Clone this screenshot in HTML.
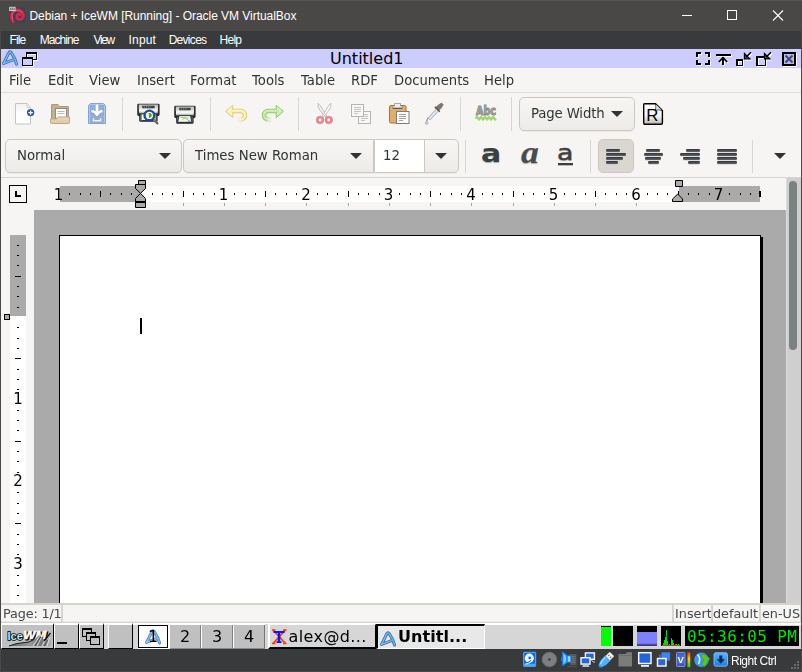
<!DOCTYPE html>
<html><head><meta charset="utf-8"><title>Debian + IceWM [Running] - Oracle VM VirtualBox</title>
<style>
html,body{margin:0;padding:0;}
body{width:802px;height:672px;position:relative;overflow:hidden;background:#4a4846;font-family:"DejaVu Sans","Liberation Sans",sans-serif;}
.a{position:absolute;}
.t{position:absolute;white-space:nowrap;line-height:1;}
.m,.st,.ct{will-change:transform;}
svg{position:absolute;overflow:visible;}
#vbt{left:0;top:0;width:802px;height:31px;background:#4a4846;}
#vbm{left:1px;top:31px;width:800px;height:18px;background:#393a3b;}
.vb{font-family:"Liberation Sans",sans-serif;color:#fff;font-size:12px;}
#ice{left:1px;top:49px;width:800px;height:19px;background:#ccccff;}
#abi{left:1px;top:68px;width:800px;height:555px;background:#f6f5f4;}
#doc{left:34px;top:210px;width:752px;height:393px;background:#aaaaaa;}
#page{left:59px;top:235px;width:701px;height:368px;background:#fff;border-left:1px solid #000;border-top:1px solid #000;box-sizing:border-box;}
#task{left:1px;top:623px;width:800px;height:26px;background:#d6d6d6;}
#vbs{left:1px;top:649px;width:800px;height:22px;background:#393a3b;}
.m{font-size:13.2px;color:#2e3436;top:73.5px;}
.sep{position:absolute;width:1px;background:#d9d5d1;}
.combo{position:absolute;box-sizing:border-box;border:1px solid #cdc7c2;border-radius:5px;background:linear-gradient(#f7f6f5,#edebe9);box-shadow:0 1px 0 rgba(0,0,0,0.04);}
.ct{font-size:13.3px;color:#2e3436;}
.arr{position:absolute;width:0;height:0;border-left:6px solid transparent;border-right:6px solid transparent;border-top:6px solid #2e3436;}
.tb{position:absolute;box-sizing:border-box;background:#c3c3c3;border-top:1px solid #fff;border-left:1px solid #fff;border-right:1px solid #5a5a5a;border-bottom:1px solid #5a5a5a;}
.st{font-size:12.8px;color:#41474a;top:608px;}
</style></head><body>
<div class="a" id="vbt"><div class="a" style="left:0;top:0;width:802px;height:1px;background:#585654"></div><div class="t vb" style="left:29.4px;top:10px;letter-spacing:-0.04px;">Debian + IceWM [Running] - Oracle VM VirtualBox</div><svg style="left:9px;top:6px" width="17" height="18" viewBox="9 6 17 18"><rect x="9.200" y="7.200" width="15.800" height="15.600" fill="#3a4356"/><path d="M13.300 21.800 C10.800 18.500 10.600 13.500 13.500 11.200 C17 8.600 22.400 10.200 23.300 14.200 C24 17.600 21.600 20 19 19.400 C16.600 18.800 16 16 17.400 14.600 C18.400 13.700 19.900 14 20.300 15" fill="none" stroke="#e4234b" stroke-width="2.600" stroke-linecap="round"/><path d="M12.600 19 C11.300 15.500 12.300 12.500 14.500 11.300 C17 10 20.500 10.600 22 12.800" fill="none" stroke="#f56a84" stroke-width="0.800" stroke-linecap="round"/><rect x="9.200" y="6.800" width="6.400" height="4.200" fill="#d4d4d4"/><rect x="10.200" y="7.800" width="4.400" height="2" fill="#5a5a5a"/><rect x="11.200" y="8.200" width="1" height="1" fill="#ddd"/><rect x="12.800" y="8.200" width="1" height="1" fill="#ddd"/></svg><svg style="left:640px;top:0" width="162" height="31" viewBox="0 0 162 31"><g stroke="#fff" stroke-width="1" fill="none" shape-rendering="crispEdges"><line x1="42" y1="15.5" x2="52" y2="15.5"/><rect x="87.5" y="10.5" width="9" height="9"/></g><g stroke="#fff" stroke-width="1.1" fill="none"><line x1="133" y1="10.5" x2="143" y2="20.5"/><line x1="143" y1="10.5" x2="133" y2="20.5"/></g></svg></div>
<div class="a" id="vbm"><div class="t vb" style="left:8.54px;top:3px;letter-spacing:-0.893px;">File</div><div class="t vb" style="left:38.64px;top:3px;letter-spacing:-0.92px;">Machine</div><div class="t vb" style="left:92.5px;top:3px;letter-spacing:-1.367px;">View</div><div class="t vb" style="left:127.62px;top:3px;letter-spacing:0.16px;">Input</div><div class="t vb" style="left:167.64px;top:3px;letter-spacing:-0.697px;">Devices</div><div class="t vb" style="left:218.54px;top:3px;letter-spacing:-0.74px;">Help</div></div>
<div class="a" id="ice"><div class="t" style="left:329px;top:2px;font-size:16px;color:#000;">Untitled1</div></div>
<svg style="left:1px;top:48.7px;opacity:1" width="18" height="17" viewBox="1 49.500 18 17"><path d="M3.600 63.900 L8.700 53.600 Q9.900 51.200 11.400 53.400 C13.600 56.600 15.400 60.400 16.600 64.600 M3.600 63.900 L13.700 60.100" fill="none" stroke="#3772b8" stroke-width="3.100" stroke-linecap="round" stroke-linejoin="round"/><path d="M3.600 63.900 L8.700 53.600 Q9.900 51.200 11.400 53.400 C13.600 56.600 15.400 60.400 16.600 64.600 M3.600 63.900 L13.700 60.100" fill="none" stroke="#4f8fd0" stroke-width="1.900" stroke-linecap="round" stroke-linejoin="round"/><path d="M3.600 63.900 L8.700 53.600 Q9.900 51.200 11.400 53.400 C13.600 56.600 15.400 60.400 16.600 64.600 M3.600 63.900 L13.700 60.100" fill="none" stroke="#9ccaee" stroke-width="0.900" stroke-linecap="round" stroke-linejoin="round" stroke-dasharray="1.200 1"/></svg><svg style="left:20px;top:50px" width="20" height="18" viewBox="20 50 20 18" shape-rendering="crispEdges"><g fill="#fff"><path d="M27 53 H38 V61 H27 Z M28 55 V60 H37 V55 Z" fill-rule="evenodd"/><path d="M23 58 H34 V67 H23 Z M24 60 V66 H33 V60 Z" fill-rule="evenodd"/></g><g fill="#000"><path d="M26 52 H37 V60 H26 Z M27 54 V59 H36 V54 Z" fill-rule="evenodd"/></g><rect x="23" y="58" width="9" height="7" fill="#ccccff"/><g fill="#000"><path d="M22 57 H33 V66 H22 Z M23 59 V65 H32 V59 Z" fill-rule="evenodd"/></g></svg><svg style="left:690px;top:49px" width="112" height="19" viewBox="690 49 112 19" shape-rendering="crispEdges"><g transform="translate(1,1)" fill="#fff" stroke="none"><rect x="696" y="52" width="5" height="2"/><rect x="696" y="52" width="2" height="5"/><rect x="705" y="52" width="5" height="2"/><rect x="708" y="52" width="2" height="5"/><rect x="696" y="63" width="5" height="2"/><rect x="696" y="60" width="2" height="5"/><rect x="705" y="63" width="5" height="2"/><rect x="708" y="60" width="2" height="5"/><rect x="716" y="54" width="15" height="2"/><rect x="722" y="57" width="2" height="8"/><path d="M723 56.600 L727.800 61.400 L726.600 62.600 L723 59 L719.400 62.600 L718.200 61.400 Z" shape-rendering="auto"/><path d="M736 59 H743 V66 H736 Z M738 61 V64.800 H741.800 V61 Z" fill-rule="evenodd"/><path d="M756 56 H766 V66 H756 Z M758 58 V64.800 H764.800 V58 Z" fill-rule="evenodd"/></g><g transform="translate(1,1)" shape-rendering="auto"><path d="M744.5 53.500 V58.800 H749.8 Z" fill="#fff" stroke="#fff" stroke-width="1.300" stroke-linejoin="miter"/><path d="M746 57.300 L751 52.300" stroke="#fff" stroke-width="1.500" fill="none"/></g><g transform="translate(1,1)" shape-rendering="auto"><path d="M764.5 53.500 V58.800 H769.8 Z" fill="#fff" stroke="#fff" stroke-width="1.300" stroke-linejoin="miter"/><path d="M766 57.300 L771 52.300" stroke="#fff" stroke-width="1.500" fill="none"/></g><g transform="translate(0,0)" fill="#000" stroke="none"><rect x="696" y="52" width="5" height="2"/><rect x="696" y="52" width="2" height="5"/><rect x="705" y="52" width="5" height="2"/><rect x="708" y="52" width="2" height="5"/><rect x="696" y="63" width="5" height="2"/><rect x="696" y="60" width="2" height="5"/><rect x="705" y="63" width="5" height="2"/><rect x="708" y="60" width="2" height="5"/><rect x="716" y="54" width="15" height="2"/><rect x="722" y="57" width="2" height="8"/><path d="M723 56.600 L727.800 61.400 L726.600 62.600 L723 59 L719.400 62.600 L718.200 61.400 Z" shape-rendering="auto"/><path d="M736 59 H743 V66 H736 Z M738 61 V64.800 H741.800 V61 Z" fill-rule="evenodd"/><path d="M756 56 H766 V66 H756 Z M758 58 V64.800 H764.800 V58 Z" fill-rule="evenodd"/></g><g transform="translate(0,0)" shape-rendering="auto"><path d="M744.5 53.500 V58.800 H749.8 Z" fill="#50507c" stroke="#000" stroke-width="1.300" stroke-linejoin="miter"/><path d="M746 57.300 L751 52.300" stroke="#000" stroke-width="1.500" fill="none"/></g><g transform="translate(0,0)" shape-rendering="auto"><path d="M764.5 53.500 V58.800 H769.8 Z" fill="#50507c" stroke="#000" stroke-width="1.300" stroke-linejoin="miter"/><path d="M766 57.300 L771 52.300" stroke="#000" stroke-width="1.500" fill="none"/></g><rect x="783" y="53" width="14" height="14" fill="#fff"/><rect x="782" y="52" width="14" height="14" fill="#000"/><rect x="784" y="54" width="10" height="10" fill="#b9b9e8"/><g shape-rendering="auto" stroke="#46466e" stroke-width="2"><path d="M785.500 55.500 L792.500 62.500 M792.500 55.500 L785.500 62.500"/></g></svg>
<div class="a" id="abi"></div>
<div class="t m" style="left:9px;">File</div><div class="t m" style="left:48px;">Edit</div><div class="t m" style="left:89px;">View</div><div class="t m" style="left:137px;">Insert</div><div class="t m" style="left:190px;">Format</div><div class="t m" style="left:252px;">Tools</div><div class="t m" style="left:301px;">Table</div><div class="t m" style="left:351px;">RDF</div><div class="t m" style="left:394px;">Documents</div><div class="t m" style="left:484px;">Help</div><div class="a" style="left:1px;top:92px;width:800px;height:1px;background:#dedbd8"></div><div class="a" style="left:1px;top:177px;width:800px;height:1px;background:#d8d4d0"></div><div class="sep" style="left:122px;top:97px;height:34px"></div><div class="sep" style="left:210px;top:97px;height:34px"></div><div class="sep" style="left:298px;top:97px;height:34px"></div><div class="sep" style="left:460px;top:97px;height:34px"></div><div class="sep" style="left:511px;top:97px;height:34px"></div><div class="sep" style="left:465px;top:140px;height:33px"></div><div class="sep" style="left:590px;top:140px;height:33px"></div><div class="sep" style="left:752px;top:140px;height:33px"></div>
<svg style="left:0;top:92px" width="802" height="44" viewBox="0 92 802 44">
<defs>
<linearGradient id="gpaper" x1="0" y1="0" x2="0" y2="1"><stop offset="0" stop-color="#f1f1ef"/><stop offset="0.5" stop-color="#ffffff"/><stop offset="1" stop-color="#ffffff"/></linearGradient>
<linearGradient id="gprn" x1="0" y1="0" x2="0" y2="1"><stop offset="0" stop-color="#f4f4f2"/><stop offset="0.55" stop-color="#d3d7cf"/><stop offset="1" stop-color="#888a85"/></linearGradient>
<linearGradient id="gundo" x1="0" y1="0" x2="0" y2="1"><stop offset="0" stop-color="#dcc76c"/><stop offset="0.75" stop-color="#e4d27e"/><stop offset="1" stop-color="#f6f5f4"/></linearGradient>
<linearGradient id="gundo2" x1="0" y1="0" x2="0" y2="1"><stop offset="0" stop-color="#faf3c4"/><stop offset="0.75" stop-color="#f8eda6"/><stop offset="1" stop-color="#f6f5f4"/></linearGradient>
<linearGradient id="gredo" x1="0" y1="0" x2="0" y2="1"><stop offset="0" stop-color="#8cc665"/><stop offset="0.75" stop-color="#9dd278"/><stop offset="1" stop-color="#f6f5f4"/></linearGradient>
<linearGradient id="gredo2" x1="0" y1="0" x2="0" y2="1"><stop offset="0" stop-color="#d2f0bc"/><stop offset="0.75" stop-color="#bfe79e"/><stop offset="1" stop-color="#f6f5f4"/></linearGradient>
<linearGradient id="gR" x1="0" y1="0" x2="0" y2="1"><stop offset="0" stop-color="#ffffff"/><stop offset="0.6" stop-color="#f4f3f0"/><stop offset="1" stop-color="#bdb9b0"/></linearGradient>
<linearGradient id="gfold" x1="0" y1="0" x2="0" y2="1"><stop offset="0" stop-color="#ead9bd"/><stop offset="1" stop-color="#dcc6a2"/></linearGradient>
<linearGradient id="gprt" x1="0" y1="0" x2="0" y2="1"><stop offset="0" stop-color="#b9bcb5"/><stop offset="1" stop-color="#e6e8e3"/></linearGradient><linearGradient id="gprb" x1="0" y1="0" x2="0" y2="1"><stop offset="0" stop-color="#ffffff"/><stop offset="0.6" stop-color="#e4e6e1"/><stop offset="1" stop-color="#9a9d97"/></linearGradient>
<linearGradient id="gfadeL" gradientUnits="userSpaceOnUse" x1="237" y1="0" x2="244.500" y2="0"><stop offset="0" stop-color="#f6f5f4" stop-opacity="1"/><stop offset="1" stop-color="#f6f5f4" stop-opacity="0"/></linearGradient><linearGradient id="gfadeR" gradientUnits="userSpaceOnUse" x1="272" y1="0" x2="264.500" y2="0"><stop offset="0" stop-color="#f6f5f4" stop-opacity="1"/><stop offset="1" stop-color="#f6f5f4" stop-opacity="0"/></linearGradient>
</defs>
<!-- new -->
<path d="M15.5 103.5 H27 L30.5 107.5 V124 H15.5 Z" fill="url(#gpaper)" stroke="#c3c6bd" stroke-width="1"/>
<path d="M27 103.8 V107.5 H30.3" fill="#eeeeec" stroke="#c9ccc4" stroke-width="0.8"/>
<circle cx="30.6" cy="112.6" r="3.7" fill="#2b5aa6"/>
<path d="M28.4 112.6 H32.8 M30.6 110.4 V114.8" stroke="#fff" stroke-width="1.2" fill="none"/>
<!-- open -->
<path d="M51.5 105 Q51.5 104.5 52 104.5 H58 L59.5 106.5 H68 Q68.5 106.5 68.5 107 V122 H51.5 Z" fill="#c5af8c" stroke="#ae9877" stroke-width="1"/>
<rect x="55.5" y="108.5" width="11" height="10" fill="#fbfbfb" stroke="#8a8c88" stroke-width="1"/>
<path d="M57.5 111.5 H64.5 M57.5 113.5 H64.5" stroke="#b9bbb6" stroke-width="1"/>
<path d="M50.5 119 H56.5 L58.5 117 H69.5 V122.5 Q69.5 123.5 68.5 123.5 H51.5 Q50.5 123.5 50.5 122.5 Z" fill="url(#gfold)" stroke="#bfa882" stroke-width="1"/>
<!-- save -->
<path d="M88.500 105.500 L90.500 103.500 H103.500 L105.500 105.500 V123.500 H88.500 Z" fill="#b1c8ea" stroke="#84a3d5" stroke-width="1"/>
<rect x="90.500" y="105.500" width="13" height="10.500" fill="#8fafde" stroke="#7f9fd3" stroke-width="0.600"/>
<rect x="90.500" y="117" width="13" height="5.300" fill="#8fafde" stroke="#7f9fd3" stroke-width="0.600"/>
<g fill="none" stroke-linecap="round" stroke-linejoin="round">
<path d="M97 106.300 V114 M92.600 111.300 C94.500 111.800 96 113 97 115 C98 113 99.500 111.800 101.400 111.300" stroke="#8796ad" stroke-width="2.800" transform="translate(0,0.900)"/>
<path d="M97 105.800 V114 M92.600 111.300 C94.500 111.800 96 113 97 115 C98 113 99.500 111.800 101.400 111.300" stroke="#fff" stroke-width="2.700"/>
</g>
<path d="M93.500 118.300 V120.800 H100.500 V118.300" fill="none" stroke="#9aa3b0" stroke-width="1.400" transform="translate(0,0.800)"/>
<path d="M93.500 118.300 V120.800 H100.500 V118.300" fill="none" stroke="#f2f2f2" stroke-width="1.500"/>
<!-- print preview -->
<g><path d="M138.4 103.8 H158.4 Q159.6 103.8 159.6 105 V114.3 Q159.6 116.3 157.6 116.3 H139.2 Q137.2 116.3 137.2 114.3 V105 Q137.2 103.8 138.4 103.8 Z" fill="#2b3032"/><rect x="138.8" y="104.5" width="19.2" height="4.800" fill="url(#gprt)"/><rect x="142.2" y="105.7" width="12.4" height="2.500" rx="0.500" fill="#3b4042"/><path d="M143.7 106.95 H150.7" stroke="#a9aca6" stroke-width="0.900" stroke-dasharray="1.300 0.900"/><rect x="139" y="109.3" width="18.8" height="4" fill="url(#gprb)"/><path d="M139 109.8 H157.8" stroke="#fff" stroke-width="1"/><path d="M139.2 114.3 H157.6 V120.6 Q157.6 121.8 156.4 121.8 H140.4 Q139.2 121.8 139.2 120.6 Z" fill="#1f2426"/><rect x="140.2" y="114.6" width="1.300" height="6.500" fill="#6d716c"/><rect x="155.3" y="114.6" width="1.300" height="6.500" fill="#6d716c"/><rect x="141.500" y="114.300" width="14" height="5.800" fill="#eceeea"/><path d="M153.300 119.300 L157.400 123.400" stroke="#6b6660" stroke-width="2.300" stroke-linecap="round"/>
<path d="M153.300 119.300 L155 121" stroke="#8a8378" stroke-width="1.200" stroke-linecap="round"/>
<circle cx="149.400" cy="115.400" r="4.700" fill="#eef4ea" stroke="#1f4f9e" stroke-width="2.100"/>
<circle cx="149.400" cy="115.400" r="5.600" fill="none" stroke="#163a78" stroke-width="0.500"/>
<path d="M147.500 113.500 C149 112.500 151 113 151.800 114.500 C152 116.500 150.500 118 148.800 117.800 C149.500 116.500 148.500 115 147.500 113.500 Z" fill="#4e9a2a"/>
<circle cx="148.300" cy="114.300" r="0.900" fill="#fff"/>
</g>
<!-- print -->
<g><path d="M175.4 105.8 H194.4 Q195.6 105.8 195.6 107 V116.3 Q195.6 118.3 193.6 118.3 H176.2 Q174.2 118.3 174.2 116.3 V107 Q174.2 105.8 175.4 105.8 Z" fill="#2b3032"/><rect x="175.8" y="106.5" width="18.2" height="4.800" fill="url(#gprt)"/><rect x="179.2" y="107.7" width="11.4" height="2.500" rx="0.500" fill="#3b4042"/><path d="M180.7 108.95 H187.7" stroke="#a9aca6" stroke-width="0.900" stroke-dasharray="1.300 0.900"/><rect x="176" y="111.3" width="17.8" height="4" fill="url(#gprb)"/><path d="M176 111.8 H193.8" stroke="#fff" stroke-width="1"/><path d="M176.2 116.3 H193.6 V122.6 Q193.6 123.8 192.4 123.8 H177.4 Q176.2 123.8 176.2 122.6 Z" fill="#1f2426"/><rect x="177.2" y="116.6" width="1.300" height="6.500" fill="#6d716c"/><rect x="191.3" y="116.6" width="1.300" height="6.500" fill="#6d716c"/><path d="M179 115.600 H190.500 L191.800 122.300 H177.700 Z" fill="#f3f5f1" stroke="#0c0e0f" stroke-width="0.700"/>
<path d="M180.500 117.300 L184 117.800 L186.500 119 L189 120.800 M182.500 119.800 L184.500 117.500 L188.500 118.300" stroke="#93d468" stroke-width="1" fill="none"/>
<rect x="188.300" y="120.600" width="2" height="1.200" fill="#4a8be0"/>
</g>
<!-- undo -->
<g fill="none" stroke-linejoin="round">
<path d="M233 111 H240.800 A4.200 4.200 0 0 1 240.800 119.400 H237" stroke="#dfcb74" stroke-width="4.500"/>
<path d="M225.600 111.400 L232.800 105.300 V117.600 Z" fill="#f9f1bb" stroke="#dfcb74" stroke-width="1"/>
<path d="M231.500 111 H240.800 A4.200 4.200 0 0 1 240.800 119.400 H237" stroke="#f9f0b4" stroke-width="2.600"/>
<path d="M228 110.800 L232 107.400 M233 110.300 H240.800 A4.200 4.200 0 0 1 244.700 113.300" stroke="#fdf9dc" stroke-width="0.900"/>
<rect x="236" y="116.800" width="9" height="6" fill="url(#gfadeL)" stroke="none"/>
</g>
<!-- redo -->
<g fill="none" stroke-linejoin="round">
<path d="M276 111 H268.200 A4.200 4.200 0 0 0 268.200 119.400 H272" stroke="#8fc96a" stroke-width="4.500"/>
<path d="M283.400 111.400 L276.200 105.300 V117.600 Z" fill="#cdeeb4" stroke="#8fc96a" stroke-width="1"/>
<path d="M277.500 111 H268.200 A4.200 4.200 0 0 0 268.200 119.400 H272" stroke="#c4eaa6" stroke-width="2.600"/>
<path d="M281 110.800 L277 107.400 M276 110.300 H268.200 A4.200 4.200 0 0 0 264.300 113.300" stroke="#e4f6d6" stroke-width="0.900"/>
<rect x="264" y="116.800" width="9" height="6" fill="url(#gfadeR)" stroke="none"/>
</g>
<!-- cut -->
<g>
<path d="M318.200 103.300 C317.500 106 318.600 108.500 320.500 111 L325.600 117.400 L326.600 116 L320.500 106 Z" fill="#f2f2f0" stroke="#a9aba6" stroke-width="0.7"/>
<path d="M330.700 103.300 C331.400 106 330.300 108.500 328.400 111 L323.300 117.400 L322.300 116 L328.400 106 Z" fill="#fafaf8" stroke="#a9aba6" stroke-width="0.7"/>
<circle cx="320" cy="120" r="2.600" fill="#fff" stroke="#e48a8e" stroke-width="2.400"/>
<circle cx="328.800" cy="120" r="2.600" fill="#fff" stroke="#e48a8e" stroke-width="2.400"/>
<circle cx="320" cy="120" r="3.900" fill="none" stroke="#d9767a" stroke-width="0.5"/>
<circle cx="328.800" cy="120" r="3.900" fill="none" stroke="#d9767a" stroke-width="0.5"/>
</g>
<!-- copy -->
<g>
<rect x="358.500" y="111.500" width="12" height="12" fill="#f7f7f6" stroke="#b4b5b1" stroke-width="1"/>
<path d="M361 114.500 H368 M361 116.500 H368 M361 118.500 H368 M361 120.500 H365" stroke="#c4c5c2" stroke-width="1"/>
<rect x="351.500" y="104.500" width="12" height="12" fill="#f7f7f6" stroke="#b4b5b1" stroke-width="1"/>
<path d="M354 107.500 H361 M354 109.500 H361 M354 111.500 H361 M354 113.500 H358" stroke="#c4c5c2" stroke-width="1"/>
</g>
<!-- paste -->
<g>
<rect x="389.500" y="105.500" width="16.500" height="17.500" rx="1.500" fill="#e0b06a" stroke="#a87420" stroke-width="1"/>
<path d="M392.800 108.300 V106 H394.500 V103.500 H400.500 V106 H402.200 V108.300 Z" fill="#eeeeec" stroke="#777" stroke-width="0.6"/>
<path d="M392.800 108.300 H402.200" stroke="#4a4c48" stroke-width="1"/>
<rect x="396.500" y="111.500" width="12.500" height="12" fill="#fdfdfd" stroke="#7b7d79" stroke-width="1"/>
<path d="M399 114.500 H406 M399 116.500 H406 M399 118.500 H406 M399 120.500 H403" stroke="#a0a29e" stroke-width="1"/>
</g>
<!-- eyedropper -->
<g>
<path d="M428 117.800 L437 108.500 L439 110.500 L430 119.800 Z" fill="#dfe6ee" stroke="#8d949a" stroke-width="0.8"/>
<path d="M435.500 107.800 L438 105.300 L441.500 103 L443.300 104.800 L441 108.300 L438.500 110.800 Z" fill="#7d776b" stroke="#6a655b" stroke-width="0.6"/>
<path d="M434.800 106.800 L439.800 111.800" stroke="#5f5a52" stroke-width="1.600"/>
<path d="M428.200 118 C426.800 119.300 427.200 120.500 426.500 121.600" stroke="#9aa0a6" stroke-width="1.400" fill="none"/>
<circle cx="426.700" cy="123" r="1.500" fill="#c9ced4" stroke="#a2a8ae" stroke-width="0.5"/>
</g>
<!-- abc -->
<text x="476" y="114.500" font-family="'DejaVu Sans','Liberation Sans',sans-serif" font-weight="bold" font-size="12.500" fill="#aeb0ac" stroke="#868884" stroke-width="1" textLength="20" lengthAdjust="spacingAndGlyphs">Abc</text>
<path d="M475.500 118.500 L477 117 L479 119.500 L481 117 L483 119.500 L485 117 L487 119.500 L489 117 L491 119.500 L493 117 L495 119.500 L496 118.500" fill="none" stroke="#9fd56f" stroke-width="2.300" stroke-linejoin="round"/>
<!-- R -->
<path d="M644.500 103.700 H655.500 L662.400 110.600 V123 Q662.400 124.200 661.200 124.200 H644.500 Q643.700 124.200 643.700 123 V104.700 Q643.700 103.700 644.500 103.700 Z" fill="url(#gR)" stroke="#000" stroke-width="1.400"/>
<path d="M655.500 104 C656 107 655.800 109 655 110.300 C657 109.600 659.500 109.800 662 110.600" fill="#e4e2dc" stroke="#000" stroke-width="0.6"/>
<text x="646.300" y="120.600" font-family="'Liberation Sans',sans-serif" font-size="16.800" fill="#000">R</text>
</svg>


<!--TOOLBAR2-->
<div class="combo" style="left:519px;top:97px;width:116px;height:34px"></div><div class="t ct" style="left:530.5px;top:107px;letter-spacing:-0.15px">Page Width</div><div class="arr" style="left:611px;top:111px"></div><div class="combo" style="left:5px;top:139px;width:177px;height:34px"></div><div class="t ct" style="left:17px;top:149px">Normal</div><div class="arr" style="left:159px;top:153px"></div><div class="combo" style="left:183px;top:139px;width:191px;height:34px;border-radius:5px 0 0 5px"></div><div class="t ct" style="left:195px;top:149px">Times New Roman</div><div class="arr" style="left:350px;top:153px"></div><div class="combo" style="left:374px;top:139px;width:85px;height:34px;border-radius:0 5px 5px 0"></div><div class="a" style="left:375px;top:140px;width:49px;height:32px;background:#fff;border-right:1px solid #cdc7c2"></div><div class="t ct" style="left:383px;top:149px">12</div><div class="arr" style="left:435px;top:153px"></div><div class="a" style="left:598px;top:139px;width:36px;height:34px;background:#dad6d2;border-radius:5px;border:1px solid #cdc7c2;box-sizing:border-box"></div><div class="arr" style="left:774px;top:153px"></div><div class="a" style="left:606.4px;top:149px;width:14px;height:2.700px;border-radius:1.300px;background:linear-gradient(#2e3234,#63676a);box-shadow:0 0.500px 0 #c8c8c6"></div><div class="a" style="left:606.4px;top:153px;width:19.3px;height:2.700px;border-radius:1.300px;background:linear-gradient(#2e3234,#63676a);box-shadow:0 0.500px 0 #c8c8c6"></div><div class="a" style="left:606.4px;top:157px;width:16.3px;height:2.700px;border-radius:1.300px;background:linear-gradient(#2e3234,#63676a);box-shadow:0 0.500px 0 #c8c8c6"></div><div class="a" style="left:606.4px;top:161px;width:11.3px;height:2.700px;border-radius:1.300px;background:linear-gradient(#2e3234,#63676a);box-shadow:0 0.500px 0 #c8c8c6"></div><div class="a" style="left:646.25px;top:149px;width:14px;height:2.700px;border-radius:1.300px;background:linear-gradient(#2e3234,#63676a);box-shadow:0 0.500px 0 #c8c8c6"></div><div class="a" style="left:643.6px;top:153px;width:19.3px;height:2.700px;border-radius:1.300px;background:linear-gradient(#2e3234,#63676a);box-shadow:0 0.500px 0 #c8c8c6"></div><div class="a" style="left:645.1px;top:157px;width:16.3px;height:2.700px;border-radius:1.300px;background:linear-gradient(#2e3234,#63676a);box-shadow:0 0.500px 0 #c8c8c6"></div><div class="a" style="left:647.6px;top:161px;width:11.3px;height:2.700px;border-radius:1.300px;background:linear-gradient(#2e3234,#63676a);box-shadow:0 0.500px 0 #c8c8c6"></div><div class="a" style="left:685.7px;top:149px;width:14px;height:2.700px;border-radius:1.300px;background:linear-gradient(#2e3234,#63676a);box-shadow:0 0.500px 0 #c8c8c6"></div><div class="a" style="left:680.4px;top:153px;width:19.3px;height:2.700px;border-radius:1.300px;background:linear-gradient(#2e3234,#63676a);box-shadow:0 0.500px 0 #c8c8c6"></div><div class="a" style="left:683.4px;top:157px;width:16.3px;height:2.700px;border-radius:1.300px;background:linear-gradient(#2e3234,#63676a);box-shadow:0 0.500px 0 #c8c8c6"></div><div class="a" style="left:688.4px;top:161px;width:11.3px;height:2.700px;border-radius:1.300px;background:linear-gradient(#2e3234,#63676a);box-shadow:0 0.500px 0 #c8c8c6"></div><div class="a" style="left:717.4px;top:149px;width:19.3px;height:2.700px;border-radius:1.300px;background:linear-gradient(#2e3234,#63676a);box-shadow:0 0.500px 0 #c8c8c6"></div><div class="a" style="left:717.4px;top:153px;width:19.3px;height:2.700px;border-radius:1.300px;background:linear-gradient(#2e3234,#63676a);box-shadow:0 0.500px 0 #c8c8c6"></div><div class="a" style="left:717.4px;top:157px;width:19.3px;height:2.700px;border-radius:1.300px;background:linear-gradient(#2e3234,#63676a);box-shadow:0 0.500px 0 #c8c8c6"></div><div class="a" style="left:717.4px;top:161px;width:19.3px;height:2.700px;border-radius:1.300px;background:linear-gradient(#2e3234,#63676a);box-shadow:0 0.500px 0 #c8c8c6"></div><div class="t" style="left:481px;top:141px;font-size:25px;font-weight:bold;color:#3c3f40;font-family:'DejaVu Sans',sans-serif;text-shadow:0 1px 1px #aaa;transform:scaleX(1.2);transform-origin:0 0">a</div><div class="t" style="left:521px;top:136.5px;font-size:31px;font-style:italic;font-weight:bold;color:#4a4d4e;font-family:'Liberation Serif',serif;text-shadow:0 1px 1px #aaa;transform:scaleX(1.15);transform-origin:0 0">a</div><div class="t" style="left:557px;top:141.5px;font-size:22px;color:#3c3f40;font-family:'DejaVu Sans',sans-serif;text-shadow:0 1px 1px #aaa;-webkit-text-stroke:0.4px #3c3f40;transform:scaleX(1.22);transform-origin:0 0">a</div><div class="a" style="left:558px;top:162.500px;width:15px;height:2px;background:#3c3f40;box-shadow:0 1px 0 #bbb"></div><div class="a" style="left:9px;top:185px;width:18px;height:18px;box-sizing:border-box;border:1px solid #000;background:#f6f5f4"></div><div class="a" style="left:15px;top:191px;width:2px;height:6px;background:#000"></div><div class="a" style="left:15px;top:195px;width:6px;height:2px;background:#000"></div><div class="a" style="left:60px;top:186px;width:81px;height:16px;background:#aaa"></div><div class="a" style="left:141px;top:186px;width:538px;height:16px;background:#fff"></div><div class="a" style="left:679px;top:186px;width:81px;height:16px;background:#aaa"></div><div class="a" style="left:10px;top:235px;width:16px;height:81px;background:#aaa"></div><div class="a" style="left:10px;top:316px;width:16px;height:287px;background:#fff"></div><svg style="left:0;top:0" width="802" height="672" viewBox="0 0 802 672" shape-rendering="crispEdges"><rect x="69" y="193" width="1" height="2" fill="#000"/><rect x="80" y="193" width="1" height="2" fill="#000"/><rect x="90" y="193" width="1" height="2" fill="#000"/><rect x="100" y="191" width="1" height="6" fill="#000"/><rect x="110" y="193" width="1" height="2" fill="#000"/><rect x="121" y="193" width="1" height="2" fill="#000"/><rect x="131" y="193" width="1" height="2" fill="#000"/><rect x="152" y="193" width="1" height="2" fill="#000"/><rect x="162" y="193" width="1" height="2" fill="#000"/><rect x="172" y="193" width="1" height="2" fill="#000"/><rect x="183" y="191" width="1" height="6" fill="#000"/><rect x="193" y="193" width="1" height="2" fill="#000"/><rect x="203" y="193" width="1" height="2" fill="#000"/><rect x="214" y="193" width="1" height="2" fill="#000"/><rect x="234" y="193" width="1" height="2" fill="#000"/><rect x="245" y="193" width="1" height="2" fill="#000"/><rect x="255" y="193" width="1" height="2" fill="#000"/><rect x="265" y="191" width="1" height="6" fill="#000"/><rect x="275" y="193" width="1" height="2" fill="#000"/><rect x="286" y="193" width="1" height="2" fill="#000"/><rect x="296" y="193" width="1" height="2" fill="#000"/><rect x="317" y="193" width="1" height="2" fill="#000"/><rect x="327" y="193" width="1" height="2" fill="#000"/><rect x="337" y="193" width="1" height="2" fill="#000"/><rect x="348" y="191" width="1" height="6" fill="#000"/><rect x="358" y="193" width="1" height="2" fill="#000"/><rect x="368" y="193" width="1" height="2" fill="#000"/><rect x="379" y="193" width="1" height="2" fill="#000"/><rect x="399" y="193" width="1" height="2" fill="#000"/><rect x="410" y="193" width="1" height="2" fill="#000"/><rect x="420" y="193" width="1" height="2" fill="#000"/><rect x="430" y="191" width="1" height="6" fill="#000"/><rect x="440" y="193" width="1" height="2" fill="#000"/><rect x="451" y="193" width="1" height="2" fill="#000"/><rect x="461" y="193" width="1" height="2" fill="#000"/><rect x="482" y="193" width="1" height="2" fill="#000"/><rect x="492" y="193" width="1" height="2" fill="#000"/><rect x="502" y="193" width="1" height="2" fill="#000"/><rect x="513" y="191" width="1" height="6" fill="#000"/><rect x="523" y="193" width="1" height="2" fill="#000"/><rect x="533" y="193" width="1" height="2" fill="#000"/><rect x="544" y="193" width="1" height="2" fill="#000"/><rect x="564" y="193" width="1" height="2" fill="#000"/><rect x="575" y="193" width="1" height="2" fill="#000"/><rect x="585" y="193" width="1" height="2" fill="#000"/><rect x="595" y="191" width="1" height="6" fill="#000"/><rect x="605" y="193" width="1" height="2" fill="#000"/><rect x="616" y="193" width="1" height="2" fill="#000"/><rect x="626" y="193" width="1" height="2" fill="#000"/><rect x="647" y="193" width="1" height="2" fill="#000"/><rect x="657" y="193" width="1" height="2" fill="#000"/><rect x="667" y="193" width="1" height="2" fill="#000"/><rect x="678" y="191" width="1" height="6" fill="#000"/><rect x="688" y="193" width="1" height="2" fill="#000"/><rect x="698" y="193" width="1" height="2" fill="#000"/><rect x="709" y="193" width="1" height="2" fill="#000"/><rect x="729" y="193" width="1" height="2" fill="#000"/><rect x="740" y="193" width="1" height="2" fill="#000"/><rect x="750" y="193" width="1" height="2" fill="#000"/><rect x="760" y="191" width="1" height="6" fill="#000"/><rect x="759" y="191" width="2" height="6" fill="#000"/><rect x="183" y="203" width="1" height="3" fill="#aaa"/><rect x="224" y="203" width="1" height="3" fill="#aaa"/><rect x="265" y="203" width="1" height="3" fill="#aaa"/><rect x="306" y="203" width="1" height="3" fill="#aaa"/><rect x="348" y="203" width="1" height="3" fill="#aaa"/><rect x="389" y="203" width="1" height="3" fill="#aaa"/><rect x="430" y="203" width="1" height="3" fill="#aaa"/><rect x="471" y="203" width="1" height="3" fill="#aaa"/><rect x="513" y="203" width="1" height="3" fill="#aaa"/><rect x="554" y="203" width="1" height="3" fill="#aaa"/><rect x="595" y="203" width="1" height="3" fill="#aaa"/><rect x="636" y="203" width="1" height="3" fill="#aaa"/><rect x="17" y="245" width="2" height="1" fill="#000"/><rect x="17" y="255" width="2" height="1" fill="#000"/><rect x="17" y="265" width="2" height="1" fill="#000"/><rect x="15" y="276" width="6" height="1" fill="#000"/><rect x="17" y="286" width="2" height="1" fill="#000"/><rect x="17" y="296" width="2" height="1" fill="#000"/><rect x="17" y="307" width="2" height="1" fill="#000"/><rect x="17" y="327" width="2" height="1" fill="#000"/><rect x="17" y="338" width="2" height="1" fill="#000"/><rect x="17" y="348" width="2" height="1" fill="#000"/><rect x="15" y="358" width="6" height="1" fill="#000"/><rect x="17" y="369" width="2" height="1" fill="#000"/><rect x="17" y="379" width="2" height="1" fill="#000"/><rect x="17" y="389" width="2" height="1" fill="#000"/><rect x="17" y="410" width="2" height="1" fill="#000"/><rect x="17" y="420" width="2" height="1" fill="#000"/><rect x="17" y="430" width="2" height="1" fill="#000"/><rect x="15" y="441" width="6" height="1" fill="#000"/><rect x="17" y="451" width="2" height="1" fill="#000"/><rect x="17" y="461" width="2" height="1" fill="#000"/><rect x="17" y="472" width="2" height="1" fill="#000"/><rect x="17" y="492" width="2" height="1" fill="#000"/><rect x="17" y="503" width="2" height="1" fill="#000"/><rect x="17" y="513" width="2" height="1" fill="#000"/><rect x="15" y="523" width="6" height="1" fill="#000"/><rect x="17" y="534" width="2" height="1" fill="#000"/><rect x="17" y="544" width="2" height="1" fill="#000"/><rect x="17" y="554" width="2" height="1" fill="#000"/><rect x="17" y="575" width="2" height="1" fill="#000"/><rect x="17" y="585" width="2" height="1" fill="#000"/><rect x="17" y="595" width="2" height="1" fill="#000"/></svg><div class="t" style="left:48.6px;top:187.800px;width:20px;text-align:center;font-size:15px;color:#000">1</div><div class="t" style="left:213.6px;top:187.800px;width:20px;text-align:center;font-size:15px;color:#000">1</div><div class="t" style="left:296.1px;top:187.800px;width:20px;text-align:center;font-size:15px;color:#000">2</div><div class="t" style="left:378.6px;top:187.800px;width:20px;text-align:center;font-size:15px;color:#000">3</div><div class="t" style="left:461.1px;top:187.800px;width:20px;text-align:center;font-size:15px;color:#000">4</div><div class="t" style="left:543.6px;top:187.800px;width:20px;text-align:center;font-size:15px;color:#000">5</div><div class="t" style="left:626.1px;top:187.800px;width:20px;text-align:center;font-size:15px;color:#000">6</div><div class="t" style="left:708.6px;top:187.800px;width:20px;text-align:center;font-size:15px;color:#000">7</div><div class="t" style="left:8px;top:391.7px;width:20px;text-align:center;font-size:15px;color:#000">1</div><div class="t" style="left:8px;top:474.2px;width:20px;text-align:center;font-size:15px;color:#000">2</div><div class="t" style="left:8px;top:556.7px;width:20px;text-align:center;font-size:15px;color:#000">3</div><svg style="left:130px;top:176px" width="22" height="36" viewBox="130 176 22 36"><g fill="#aaa" stroke="#000" stroke-width="1"><path d="M138.500 180.500 H145.500 V184.500 H138.500 Z"/><path d="M135.500 184.500 H145.500 V188.500 L140.500 193.300 L135.500 188.500 Z"/><path d="M140.500 193.300 L145.500 198.500 V207.500 H135.500 V198.500 Z"/><path d="M135.500 202 H145.500" stroke-width="2"/></g></svg><svg style="left:668px;top:176px" width="22" height="36" viewBox="668 176 22 36"><g fill="#aaa" stroke="#000" stroke-width="1"><path d="M675.500 180.500 H682.500 V186.500 H675.500 Z"/><path d="M677.700 194 L682.500 199 V201.500 H672.500 V199 Z"/></g></svg><div class="a" style="left:4px;top:314px;width:6px;height:6px;box-sizing:border-box;border:1px solid #000;background:#aaa"></div><div class="a" id="doc"></div><div class="a" id="page"></div><div class="a" style="left:760px;top:235px;width:1px;height:368px;background:#000"></div><div class="a" style="left:761px;top:237px;width:2px;height:366px;background:#000"></div><div class="a" style="left:140px;top:318px;width:2px;height:16px;background:#000"></div><div class="a" style="left:786px;top:178px;width:15px;height:425px;background:#cfcfcf;border-left:1px solid #dcdcdc;box-sizing:border-box"></div><div class="a" style="left:789px;top:181px;width:8px;height:169px;background:#7c8182;border-radius:4px"></div><div class="a" style="left:1px;top:603px;width:800px;height:2px;background:#d6d2ce"></div><div class="a" style="left:1px;top:621px;width:800px;height:1px;background:#ebe9e6"></div><div class="a" style="left:1px;top:622px;width:800px;height:1px;background:#d6d2ce"></div><div class="t st" style="left:2.5px;letter-spacing:-0.15px">Page: 1/1</div><div class="t st" style="left:674.5px;">Insert</div><div class="t st" style="left:713px;">default</div><div class="t st" style="left:761.5px;">en-US</div><div class="a" style="left:61px;top:604px;width:2px;height:18px;background:#d8d4d0"></div><div class="a" style="left:672px;top:604px;width:2px;height:18px;background:#d8d4d0"></div><div class="a" style="left:711px;top:604px;width:2px;height:18px;background:#d8d4d0"></div><div class="a" style="left:759px;top:604px;width:2px;height:18px;background:#d8d4d0"></div><div class="a" style="left:800px;top:604px;width:1px;height:18px;background:#d8d4d0"></div><div class="a" id="task"></div>
<div class="a" style="left:1px;top:623px;width:800px;height:2px;background:#fff"></div>
<div class="a" style="left:1px;top:623px;width:53px;height:26px;box-sizing:border-box;background:#c0c0c0;border-top:2px solid #fff;border-left:1px solid #fff;border-right:1px solid #000;border-bottom:1px solid #000"></div><div class="a" style="left:54px;top:623px;width:25px;height:26px;box-sizing:border-box;background:#c0c0c0;border-top:2px solid #fff;border-left:1px solid #fff;border-right:1px solid #000;border-bottom:1px solid #000"></div><div class="a" style="left:79px;top:623px;width:25px;height:26px;box-sizing:border-box;background:#c0c0c0;border-top:2px solid #fff;border-left:1px solid #fff;border-right:1px solid #000;border-bottom:1px solid #000"></div><div class="a" style="left:108px;top:623px;width:25px;height:26px;box-sizing:border-box;background:#c0c0c0;border-top:2px solid #fff;border-left:1px solid #fff;border-right:1px solid #000;border-bottom:1px solid #000"></div>
<svg style="left:2px;top:625px" width="51" height="23" viewBox="2 625 51 23">
<defs><linearGradient id="gmt" x1="0" y1="0" x2="1" y2="0"><stop offset="0" stop-color="#666"/><stop offset="0.5" stop-color="#999"/><stop offset="0.75" stop-color="#777"/><stop offset="1" stop-color="#b5b5b5"/></linearGradient></defs>
<text x="24.300" y="639.800" font-family="'Liberation Sans',sans-serif" font-weight="bold" font-style="italic" font-size="11.500" fill="#000" stroke="#000" stroke-width="1.200" textLength="23" lengthAdjust="spacingAndGlyphs">WM</text>
<text x="23.300" y="638.800" font-family="'Liberation Sans',sans-serif" font-weight="bold" font-style="italic" font-size="11.500" fill="#fff" stroke="#fff" stroke-width="0.500" textLength="23" lengthAdjust="spacingAndGlyphs">WM</text>
<text x="7.500" y="640.300" font-family="'Liberation Sans',sans-serif" font-weight="bold" font-size="11" fill="#b4ecff" stroke="#000" stroke-width="1.600" paint-order="stroke" textLength="15.500" lengthAdjust="spacingAndGlyphs">Ice</text>
<path d="M9 646 L17 643.500 L29 642 L34 639.500 L37.500 637 L40 635.300 L42 638 L44 640.500 L47 639 L51.500 633.500 V646 Z" fill="url(#gmt)"/>
<path d="M9 646 L17 643.500 L29 642 L34 639.500" stroke="#1a1a1a" stroke-width="1" fill="none"/>
<path d="M33 646 L39.500 636.500 M37 646 L41 638 M42 646 L45 640.500 M47 646 L50 637" stroke="#e8e8e8" stroke-width="0.900" fill="none"/>
<path d="M35 646 L40.500 637 M44.500 646 L47.500 640" stroke="#3a3a3a" stroke-width="0.900" fill="none"/>
<path d="M44 641 L50.500 633" stroke="#111" stroke-width="1.200" fill="none"/>
</svg>
<div class="a" style="left:57px;top:642px;width:10px;height:2px;background:#000"></div>
<svg style="left:82px;top:628px" width="18" height="17" viewBox="82 628 18 17" shape-rendering="crispEdges"><g fill="#c0c0c0" stroke="#000" stroke-width="1">
<rect x="82.500" y="628.500" width="9" height="8"/><path d="M82 629.500 H92" fill="none"/>
<rect x="86.500" y="632.500" width="9" height="8"/><path d="M86 633.500 H96" fill="none"/>
<rect x="90.500" y="636.500" width="9" height="8"/><path d="M90 637.500 H100" fill="none"/></g></svg>
<!-- workspaces -->
<div class="a" style="left:170px;top:625px;width:94px;height:23px;background:#c0c0c0"></div>
<div class="a" style="left:170px;top:648px;width:95px;height:1px;background:#8a8a8a"></div>
<div class="a" style="left:200px;top:625px;width:1px;height:23px;background:#808080"></div><div class="a" style="left:232px;top:625px;width:1px;height:23px;background:#808080"></div>
<div class="a" style="left:138px;top:625px;width:30px;height:23px;box-sizing:border-box;border:1px solid #000;background:#fff"></div>
<div class="a" style="left:168px;top:625px;width:2px;height:24px;background:#fff"></div>
<div class="a" style="left:138px;top:648px;width:31px;height:1px;background:#fff"></div>
<div class="a" style="left:201px;top:625px;width:1px;height:23px;background:#fff"></div>
<div class="a" style="left:233px;top:625px;width:1px;height:23px;background:#fff"></div>
<div class="a" style="left:264px;top:625px;width:1px;height:23px;background:#777"></div>
<div class="a" style="left:265px;top:624px;width:3px;height:24px;background:#d8d8d8"></div>
<svg style="left:144px;top:627.5px;opacity:0.85" width="18" height="17" viewBox="1 49.500 18 17"><path d="M3.600 63.900 L8.700 53.600 Q9.900 51.200 11.400 53.400 C13.600 56.600 15.400 60.400 16.600 64.600 M3.600 63.900 L13.700 60.100" fill="none" stroke="#3772b8" stroke-width="3.100" stroke-linecap="round" stroke-linejoin="round"/><path d="M3.600 63.900 L8.700 53.600 Q9.900 51.200 11.400 53.400 C13.600 56.600 15.400 60.400 16.600 64.600 M3.600 63.900 L13.700 60.100" fill="none" stroke="#4f8fd0" stroke-width="1.900" stroke-linecap="round" stroke-linejoin="round"/><path d="M3.600 63.900 L8.700 53.600 Q9.900 51.200 11.400 53.400 C13.600 56.600 15.400 60.400 16.600 64.600 M3.600 63.900 L13.700 60.100" fill="none" stroke="#9ccaee" stroke-width="0.900" stroke-linecap="round" stroke-linejoin="round" stroke-dasharray="1.200 1"/></svg>
<div class="t" style="left:143px;top:629px;width:20px;text-align:center;font-size:16px;color:#000">1</div>
<div class="t" style="left:175px;top:629px;width:20px;text-align:center;font-size:16px;color:#000">2</div>
<div class="t" style="left:207px;top:629px;width:20px;text-align:center;font-size:16px;color:#000">3</div>
<div class="t" style="left:239px;top:629px;width:20px;text-align:center;font-size:16px;color:#000">4</div>
<!-- task buttons -->
<div class="a" style="left:268px;top:624px;width:108px;height:25px;box-sizing:border-box;background:#d6d6d6;border-left:2px solid #fff;border-top:1px solid #fff;border-right:1px solid #000;border-bottom:2px solid #000"></div>
<svg style="left:272px;top:629px" width="15" height="16" viewBox="0 0 15 16"><path d="M1 1 L13.500 14.500 M13.500 1 L1 14.500" stroke="#ff3c00" stroke-width="1.800" fill="none"/><path d="M0 1 H3.500 M11 1 H14.500 M0 14.500 H3.500 M11 14.500 H14.500" stroke="#ff3c00" stroke-width="1.400"/><path d="M1.500 3 H12.500 M7 3 V13 M4.500 13.200 H9.500" stroke="#0a14ff" stroke-width="1.800" fill="none"/><path d="M5.800 3 H8.200 V13 H5.800 Z" fill="#0a14ff"/></svg>
<div class="t" style="left:288.500px;top:629px;font-size:16px;color:#000;letter-spacing:0.4px">alex@d...</div>
<div class="a" style="left:376px;top:624px;width:109px;height:25px;box-sizing:border-box;background:#e8e8e8;border-left:2px solid #000;border-top:2px solid #000;border-right:1px solid #fff;border-bottom:1px solid #fff"></div>
<svg style="left:378.7px;top:629.5px;opacity:1" width="18" height="17" viewBox="1 49.500 18 17"><path d="M3.600 63.900 L8.700 53.600 Q9.900 51.200 11.400 53.400 C13.600 56.600 15.400 60.400 16.600 64.600 M3.600 63.900 L13.700 60.100" fill="none" stroke="#3772b8" stroke-width="3.100" stroke-linecap="round" stroke-linejoin="round"/><path d="M3.600 63.900 L8.700 53.600 Q9.900 51.200 11.400 53.400 C13.600 56.600 15.400 60.400 16.600 64.600 M3.600 63.900 L13.700 60.100" fill="none" stroke="#4f8fd0" stroke-width="1.900" stroke-linecap="round" stroke-linejoin="round"/><path d="M3.600 63.900 L8.700 53.600 Q9.900 51.200 11.400 53.400 C13.600 56.600 15.400 60.400 16.600 64.600 M3.600 63.900 L13.700 60.100" fill="none" stroke="#9ccaee" stroke-width="0.900" stroke-linecap="round" stroke-linejoin="round" stroke-dasharray="1.200 1"/></svg>
<div class="t" style="left:398px;top:629px;font-size:16px;font-weight:bold;color:#000;letter-spacing:0.050px">Untitl...</div>
<!-- tray -->
<div class="a" style="left:601px;top:626px;width:10px;height:20px;background:#00ff00;border-top:1px solid #000;box-sizing:border-box"></div>
<div class="a" style="left:613px;top:626px;width:20px;height:20px;background:#000"></div>
<div class="a" style="left:637px;top:626px;width:20px;height:20px;background:linear-gradient(#000 0,#000 6px,#8080ff 6px,#8080ff 17px,#40407a 19px,#30305a 20px)"></div>
<svg style="left:661px;top:626px" width="20" height="20" viewBox="0 0 20 20" shape-rendering="crispEdges"><rect width="20" height="20" fill="#000"/>
<g fill="#00e000"><rect x="2" y="17" width="1" height="3"/><rect x="3" y="14" width="1" height="6"/><rect x="4" y="11" width="1" height="9"/><rect x="5" y="4" width="1" height="16"/><rect x="6" y="15" width="1" height="5"/><rect x="8" y="18" width="1" height="2"/><rect x="10" y="12" width="1" height="8"/><rect x="11" y="14" width="1" height="6"/><rect x="12" y="17" width="1" height="3"/><rect x="14" y="18" width="2" height="2"/><rect x="17" y="18" width="1" height="2"/></g>
<g fill="#ff2020"><rect x="1" y="19" width="18" height="1" fill="#0a0"/><rect x="3" y="19" width="3" height="1"/><rect x="4" y="18" width="1" height="1"/><rect x="7" y="19" width="2" height="1"/><rect x="10" y="19" width="2" height="1"/><rect x="13" y="19" width="3" height="1"/><rect x="14" y="18" width="1" height="1"/></g></svg>
<div class="a" style="left:685px;top:626px;width:114px;height:20px;background:#000"></div>
<div class="t" style="left:687px;top:628.5px;font-family:'DejaVu Sans Mono','Liberation Mono',monospace;font-size:16px;color:#00e600;letter-spacing:0.4px">05:36:05 PM</div>

<div class="a" id="vbs"></div><div class="t vb" style="left:731px;top:655px;letter-spacing:-0.48px">Right Ctrl</div>
<svg style="left:0;top:649px" width="802" height="23" viewBox="0 649 802 23">
<defs>
<linearGradient id="vg1" x1="0" y1="0" x2="0" y2="1"><stop offset="0" stop-color="#58b4ff"/><stop offset="1" stop-color="#1f7de0"/></linearGradient>
<linearGradient id="vg2" x1="0" y1="0" x2="0" y2="1"><stop offset="0" stop-color="#ff2a00"/><stop offset="0.45" stop-color="#ffd000"/><stop offset="1" stop-color="#22cc22"/></linearGradient>
<linearGradient id="vg3" x1="0" y1="0" x2="0" y2="1"><stop offset="0" stop-color="#2a6fe0"/><stop offset="1" stop-color="#1a4fb8"/></linearGradient>
</defs>
<!-- hdd -->
<rect x="523.600" y="652.400" width="12" height="14" rx="0.800" fill="#1668dc" stroke="#3aa2ff" stroke-width="1.200"/>
<rect x="524.200" y="663.800" width="10.800" height="2.200" fill="#45aaff"/>
<ellipse cx="529.300" cy="658.300" rx="4.500" ry="4.700" fill="#f4f9ff"/>
<circle cx="529.700" cy="657.900" r="1.400" fill="#1668dc"/>
<path d="M525.800 662.800 C527.500 662.800 529.500 662 531 660.300" stroke="#1668dc" stroke-width="1.200" fill="none"/>
<path d="M525.300 664 C527.500 664 530 663 531.800 661" stroke="#f4f9ff" stroke-width="1" fill="none"/>
<!-- optical -->
<circle cx="549.400" cy="659.500" r="7.300" fill="#7e7e7e" stroke="#6a6a6a" stroke-width="0.800"/>
<circle cx="549.400" cy="659.500" r="1.200" fill="#3a3a3a"/>
<!-- audio -->
<rect x="570" y="654" width="6.500" height="11" fill="#56585a"/>
<path d="M571.500 656.500 H575.500 M571.500 658.500 H575.500 M571.500 660.500 H575.500 M571.500 662.500 H575.500" stroke="#77797b" stroke-width="0.800"/>
<rect x="567" y="665.800" width="10" height="1.300" fill="#505254"/>
<path d="M562.300 651.800 C565.500 653.500 567 655.600 567.600 655.600 H570.800 V662.400 H567.600 C567 662.400 565.500 664.300 562.300 666 Z" fill="#2194ff" stroke="#1478e6" stroke-width="0.600"/>
<path d="M563.500 653.800 C565.200 655 566 656.500 566 659 C566 661.500 565.200 663 563.500 664.200 Z" fill="#7fd0ff"/>
<rect x="568" y="656.300" width="2.300" height="5.400" fill="#8ad6ff"/>
<rect x="561" y="657" width="1.400" height="4" fill="#1478e6"/>
<!-- network -->
<rect x="585.400" y="652.900" width="9" height="6.400" fill="#2468e0" stroke="#f2f2f2" stroke-width="1.400"/>
<path d="M591.500 660.500 L593.500 662 H595" stroke="#d8d8d8" stroke-width="1" fill="none"/>
<rect x="581" y="657.700" width="9" height="6.400" fill="#2468e0" stroke="#f6f6f6" stroke-width="1.400"/>
<path d="M583 665.300 H588.500 L589.500 666.800 H582 Z" fill="#f0f0f0"/>
<!-- usb -->
<g transform="rotate(-45 606 660)">
<path d="M596.500 660 C596.500 659 597 658.500 598 658 C601 656.500 603 656.300 606 656.300 H608.500 V663.700 H606 C603 663.700 601 663.500 598 662 C597 661.500 596.500 661 596.500 660 Z" fill="#4fb2ff" stroke="#1a84ee" stroke-width="0.600"/>
<path d="M599 659 C601.500 657.800 603.500 657.500 607.500 657.500" stroke="#b4e2ff" stroke-width="1.200" fill="none"/>
<rect x="608.500" y="657" width="5.800" height="6" fill="#f6f6f6" stroke="#cfcfcf" stroke-width="0.400"/>
<rect x="610.600" y="658.200" width="1.400" height="1.200" fill="#555"/><rect x="610.600" y="660.700" width="1.400" height="1.200" fill="#555"/>
</g>
<circle cx="600" cy="666.500" r="1" fill="#1a84ee"/>
<!-- shared folder -->
<path d="M618.500 654 L625.500 654 L627 652.300 H632 V666.500 H618.500 Z" fill="#7c7c7c"/>
<path d="M618.500 655.500 H632" stroke="#6a6a6a" stroke-width="0.800"/>
<!-- display -->
<rect x="638.700" y="652.700" width="12.300" height="10.800" fill="#1f64e0" stroke="#f4f4f4" stroke-width="1.500"/>
<rect x="641" y="665" width="8" height="1.800" fill="#f0f0f0"/>
<!-- recording -->
<rect x="661.500" y="652.300" width="8.500" height="8" fill="#3f86ea" stroke="#2a6ad0" stroke-width="0.500"/>
<path d="M659 654 L661.800 655.300 V657.500 L659 658.800 Z" fill="#2a6ad0"/>
<rect x="657.500" y="658.500" width="8.500" height="7.500" fill="#2a66d8" stroke="#f4f4f4" stroke-width="1.500"/>
<!-- cpu V -->
<rect x="676.500" y="652.500" width="8.500" height="14" rx="1" fill="#3758c8" stroke="#98a8e8" stroke-width="0.800"/>
<rect x="677.600" y="654.300" width="6.400" height="9.600" fill="#4a68d8"/>
<text x="677.600" y="663" font-family="'Liberation Sans',sans-serif" font-weight="bold" font-size="9.500" fill="#ffffff">V</text>
<rect x="687.500" y="652.200" width="2.800" height="15" fill="url(#vg2)"/>
<!-- mouse -->
<circle cx="701.500" cy="659.800" r="7.300" fill="#3a96f0"/>
<path d="M697.500 654.500 C700 657 700.500 660 698.500 664" stroke="#dff0ff" stroke-width="1.600" fill="none"/>
<path d="M703 653.500 L709.700 658.500 L704.500 666.800 L701.500 664 L704 660 L700.800 657 Z" fill="#58c818" stroke="#3a9a10" stroke-width="0.500"/>
<!-- keyboard -->
<rect x="714" y="652.700" width="13.500" height="13.500" rx="2" fill="url(#vg1)" stroke="#8cc8ff" stroke-width="0.800"/>
<path d="M719.300 655.500 H722.300 V659.300 H724.800 L720.800 663.800 L716.800 659.300 H719.300 Z" fill="#0c2a58"/>
<!-- grip -->
<g fill="#6a6b6c"><rect x="797" y="661" width="2" height="2"/><rect x="794" y="664" width="2" height="2"/><rect x="797" y="664" width="2" height="2"/><rect x="791" y="667" width="2" height="2"/><rect x="794" y="667" width="2" height="2"/><rect x="797" y="667" width="2" height="2"/></g>
</svg>

</body></html>
